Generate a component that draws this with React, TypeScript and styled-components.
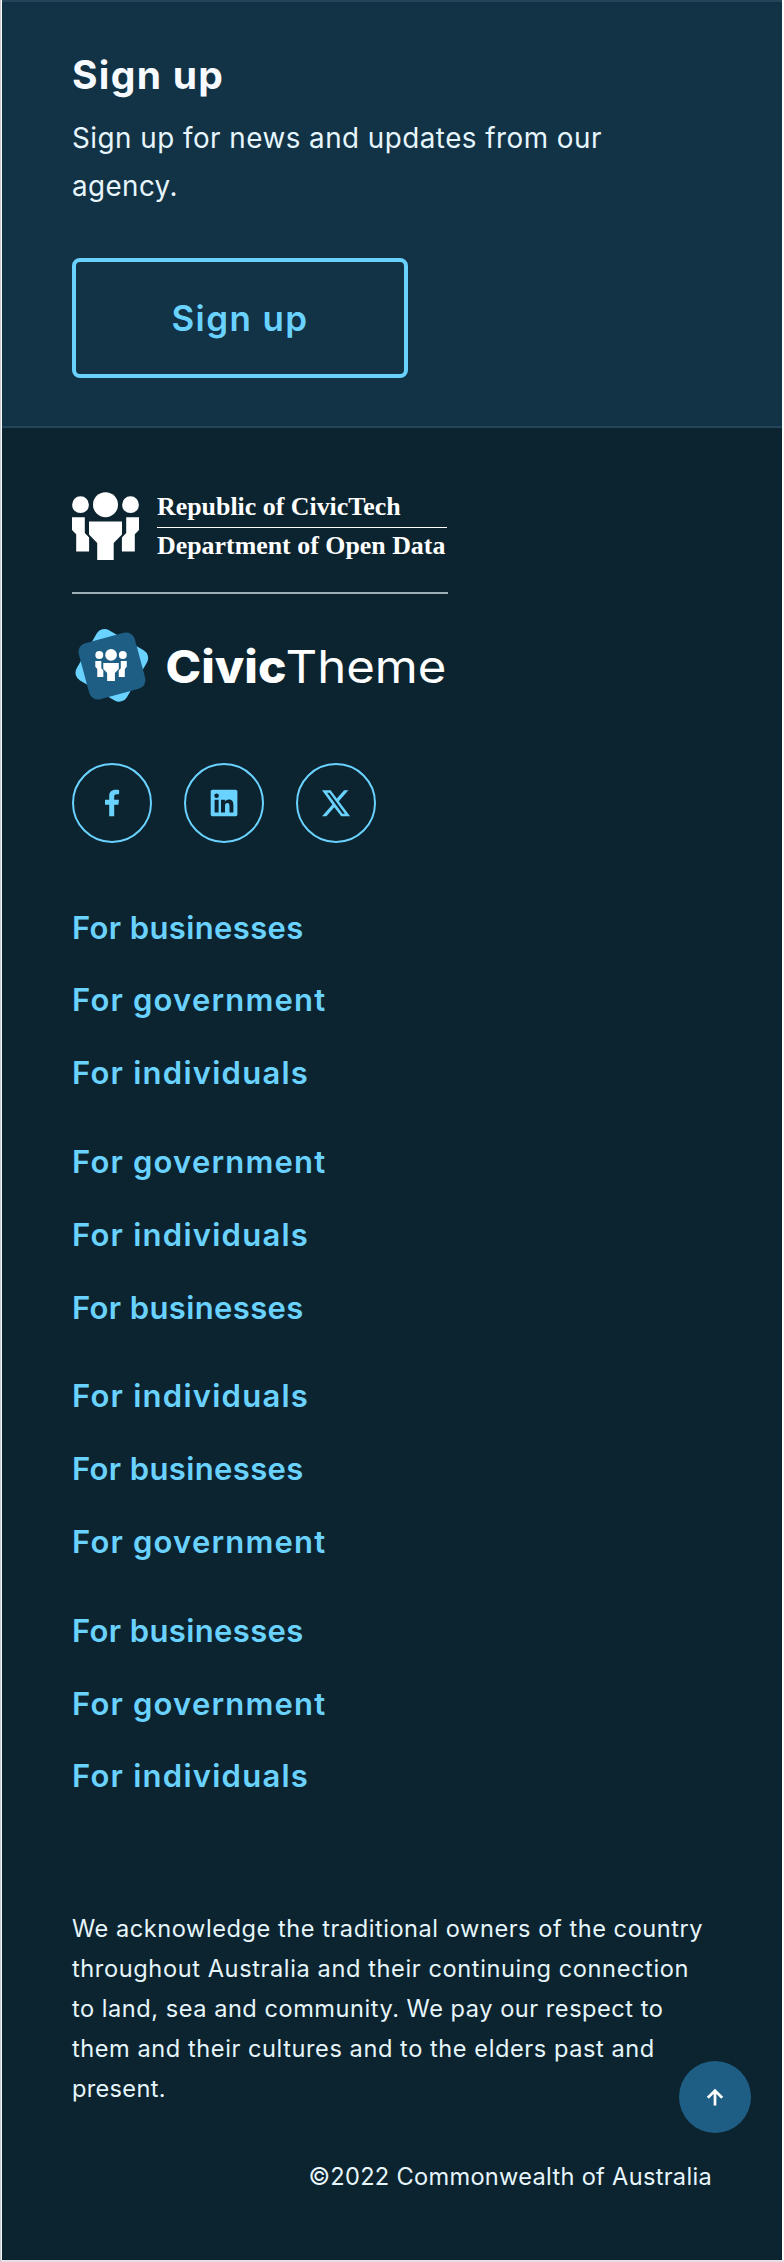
import React from 'react';
import styled, { createGlobalStyle } from 'styled-components';

const colors = {
  panel: '#123246',
  panelBorder: '#244559',
  footer: '#0c242f',
  accent: '#6ad2ff',
  text: '#e6f6fc',
  heading: '#f7fbff',
  divider: '#9bb0b9',
  button: '#1e5e84',
};

const GlobalStyle = createGlobalStyle`
  * { box-sizing: border-box; }
  body { margin: 0; background: #fafafa; }
  h2, p, ul { margin: 0; padding: 0; }
`;

const Page = styled.div`
  position: relative;
  width: 784px;
  height: 2262px;
  padding: 0 2px 2px 1px;
  background: linear-gradient(#fafafa 2260px, #e6dfe8 2260px);
  border-left: 1px solid #c9ccd0;
  font-family: Inter, 'Liberation Sans', sans-serif;
  color: ${colors.text};
`;

const SignupPanel = styled.section`
  height: 428px;
  padding: 47px 70px 0;
  background: ${colors.panel};
  border: solid ${colors.panelBorder};
  border-width: 2px 0;
`;

const Title = styled.h2`
  font-size: 39px;
  line-height: 52px;
  font-weight: 700;
  color: ${colors.heading};
`;

const Lead = styled.p`
  margin-top: 13px;
  font-size: 27.8px;
  line-height: 48px;
`;

const Line = styled.span<{ $tracking?: number }>`
  display: block;
  white-space: nowrap;
  letter-spacing: ${({ $tracking = 0 }) => $tracking}px;
`;

const SignupButton = styled.button`
  display: flex;
  align-items: center;
  justify-content: center;
  width: 336px;
  height: 120px;
  margin-top: 48px;
  padding: 0;
  background: none;
  border: 4px solid ${colors.accent};
  border-radius: 8px;
  color: ${colors.accent};
  font: 600 35px/48px Inter, 'Liberation Sans', sans-serif;
`;

const Footer = styled.footer`
  height: 1832px;
  padding: 64px 70px 0;
  background: ${colors.footer};
`;

const Brand = styled.div`
  width: 376px;
`;

const Agency = styled.div`
  display: flex;
  gap: 18px;
  height: 102px;
  border-bottom: 2px solid ${colors.divider};
`;

const AgencyName = styled.div`
  width: 290px;
  color: #fff;
  font: 700 25.9px/36px 'Liberation Serif', serif;
`;

const AgencyRow = styled.div<{ $ruled?: boolean }>`
  height: 36px;
  line-height: ${({ $ruled }) => ($ruled ? 30 : 36)}px;
  white-space: nowrap;
  border-bottom: ${({ $ruled }) => ($ruled ? '1px solid #fff' : 'none')};
`;

const ThemeLogo = styled.svg`
  display: block;
  margin-top: 30px;
`;

const Social = styled.div`
  display: flex;
  gap: 32px;
  margin-top: 59px;
`;

const SocialLink = styled.a`
  display: grid;
  place-items: center;
  width: 80px;
  height: 80px;
  border: 2px solid ${colors.accent};
  border-radius: 50%;
  color: ${colors.accent};
`;

const LinkGroups = styled.nav`
  display: flex;
  flex-direction: column;
  gap: 48.8px;
  margin-top: 64.6px;
`;

const LinkGroup = styled.ul`
  display: flex;
  flex-direction: column;
  gap: 32.8px;
  list-style: none;
`;

const LinkItem = styled.li<{ $tracking: number }>`
  height: 40px;
  font-size: 31px;
  line-height: 40px;
  font-weight: 600;
  letter-spacing: ${({ $tracking }) => $tracking}px;
  color: ${colors.accent};
`;

const Acknowledgement = styled.p`
  margin-top: 112.8px;
  font-size: 23.6px;
  line-height: 40px;
`;

const Copyright = styled.p`
  display: flex;
  justify-content: flex-end;
  margin-top: 47.6px;
  font-size: 23.6px;
  line-height: 40px;
`;

const BackToTop = styled.button`
  position: absolute;
  right: 33px;
  bottom: 129px;
  display: grid;
  place-items: center;
  width: 72px;
  height: 72px;
  padding: 0;
  border: 0;
  border-radius: 50%;
  background: ${colors.button};
`;

/* Three figures standing together, drawn on a 67 x 68 grid. */
const People = () => (
  <g fill="#fff">
    <circle cx="8.5" cy="12.7" r="8.4" />
    <circle cx="33.5" cy="12.7" r="12.5" />
    <circle cx="58.5" cy="12.7" r="8.4" />
    <path d="M0 25.3h12.8V41l4.3 4.5V59.6H4.2V42.3L0 38z" />
    <path d="M67 25.3H54.2V41l-4.3 4.5V59.6h12.9V42.3L67 38z" />
    <path d="M17 29.6h33v13l-8.3 8.5V68H25.2V51.1L17 42.6z" />
  </g>
);

type LinkName = 'businesses' | 'government' | 'individuals';

const linkTracking: Record<LinkName, number> = {
  businesses: 0.38,
  government: 1.2,
  individuals: 1.25,
};

const groups: LinkName[][] = [
  ['businesses', 'government', 'individuals'],
  ['government', 'individuals', 'businesses'],
  ['individuals', 'businesses', 'government'],
  ['businesses', 'government', 'individuals'],
];

const acknowledgement: [string, number][] = [
  ['We acknowledge the traditional owners of the country', 0.54],
  ['throughout Australia and their continuing connection', 0.6],
  ['to land, sea and community. We pay our respect to', 0.52],
  ['them and their cultures and to the elders past and', 0.56],
  ['present.', 0.3],
];

export default function App() {
  return (
    <Page>
      <GlobalStyle />
      <SignupPanel>
        <Title>
          <Line $tracking={1.3}>Sign up</Line>
        </Title>
        <Lead>
          <Line $tracking={0.48}>Sign up for news and updates from our</Line>
          <Line $tracking={0.4}>agency.</Line>
        </Lead>
        <SignupButton>
          <Line $tracking={1.4}>Sign up</Line>
        </SignupButton>
      </SignupPanel>

      <Footer>
        <Brand>
          <Agency>
            <svg width="67" height="68" viewBox="0 0 67 68">
              <People />
            </svg>
            <AgencyName>
              <AgencyRow $ruled>Republic of CivicTech</AgencyRow>
              <AgencyRow>Department of Open Data</AgencyRow>
            </AgencyName>
          </Agency>
          <ThemeLogo width="376" height="80" viewBox="72 624 376 80">
            <rect x="82.5" y="636.5" width="58" height="58" rx="9" fill={colors.accent} transform="rotate(30 112 666)" />
            <rect x="83" y="637" width="58" height="58" rx="9" fill={colors.button} transform="rotate(-15 112 666)" />
            <g transform="translate(95.3 649) scale(.47)">
              <People />
            </g>
            <text x="165.5" y="682.5" fill="#fff" fontSize="45" fontWeight="800" textLength="121" lengthAdjust="spacingAndGlyphs">Civic</text>
            <text x="285.5" y="682.5" fill="#fff" fontSize="45" fontWeight="400" textLength="161" lengthAdjust="spacingAndGlyphs">Theme</text>
          </ThemeLogo>
        </Brand>

        <Social>
          <SocialLink aria-label="Facebook">
            <svg width="32" height="32" viewBox="0 0 32 32" fill="currentColor">
              <path d="M13.2 29.3V17.7H9v-4.9h4.2V9.1c0-4.1 2.5-6.3 6.2-6.3 1.8 0 3.3.1 3.7.2v4.3h-2.5c-2 0-2.4 1-2.4 2.3v3.2H23l-.6 4.9h-4.2v11.6z" />
            </svg>
          </SocialLink>
          <SocialLink aria-label="LinkedIn">
            <svg width="32" height="32" viewBox="0 0 32 32" fill="currentColor">
              <path fillRule="evenodd" d="M4.5 2.7h23c1.1 0 1.9.8 1.9 1.8v23c0 1-.8 1.8-1.9 1.8h-23c-1 0-1.8-.8-1.8-1.8v-23c0-1 .8-1.8 1.8-1.8zM6.6 12.8v12.6h4V12.8zM8.6 6.5a2.3 2.3 0 1 0 0 4.6 2.3 2.3 0 0 0 0-4.6zM13 12.8v12.6h4v-6.2c0-1.7.3-3.3 2.4-3.3 2 0 2.1 1.9 2.1 3.4v6.1h3.9v-6.9c0-3.4-.7-6-4.7-6-1.9 0-3.2 1-3.7 2h-.1v-1.7z" />
            </svg>
          </SocialLink>
          <SocialLink aria-label="X">
            <svg width="32" height="32" viewBox="0 0 32 32" fill="currentColor">
              <path fillRule="evenodd" d="M2 3.3h8.6l6.2 8.3 7.3-8.3h4.3l-9.6 11 11.3 15h-8.9l-6.9-9.1-7.9 9.1H2.1l10.3-11.8zM7.1 5.8l15.4 21h2.4L9.6 5.8z" />
            </svg>
          </SocialLink>
        </Social>

        <LinkGroups>
          {groups.map((group, i) => (
            <LinkGroup key={i}>
              {group.map((name) => (
                <LinkItem key={name} $tracking={linkTracking[name]}>
                  For {name}
                </LinkItem>
              ))}
            </LinkGroup>
          ))}
        </LinkGroups>

        <Acknowledgement>
          {acknowledgement.map(([line, tracking]) => (
            <Line key={line} $tracking={tracking}>
              {line}
            </Line>
          ))}
        </Acknowledgement>
        <Copyright>
          <Line $tracking={0.3}>©2022 Commonwealth of Australia</Line>
        </Copyright>
      </Footer>

      <BackToTop aria-label="Back to top">
        <svg width="24" height="24" viewBox="0 0 24 24" fill="none" stroke="#fff" strokeWidth="2.7">
          <path d="M12 20.5V6M4.8 12.8L12 5.6l7.2 7.2" />
        </svg>
      </BackToTop>
    </Page>
  );
}
